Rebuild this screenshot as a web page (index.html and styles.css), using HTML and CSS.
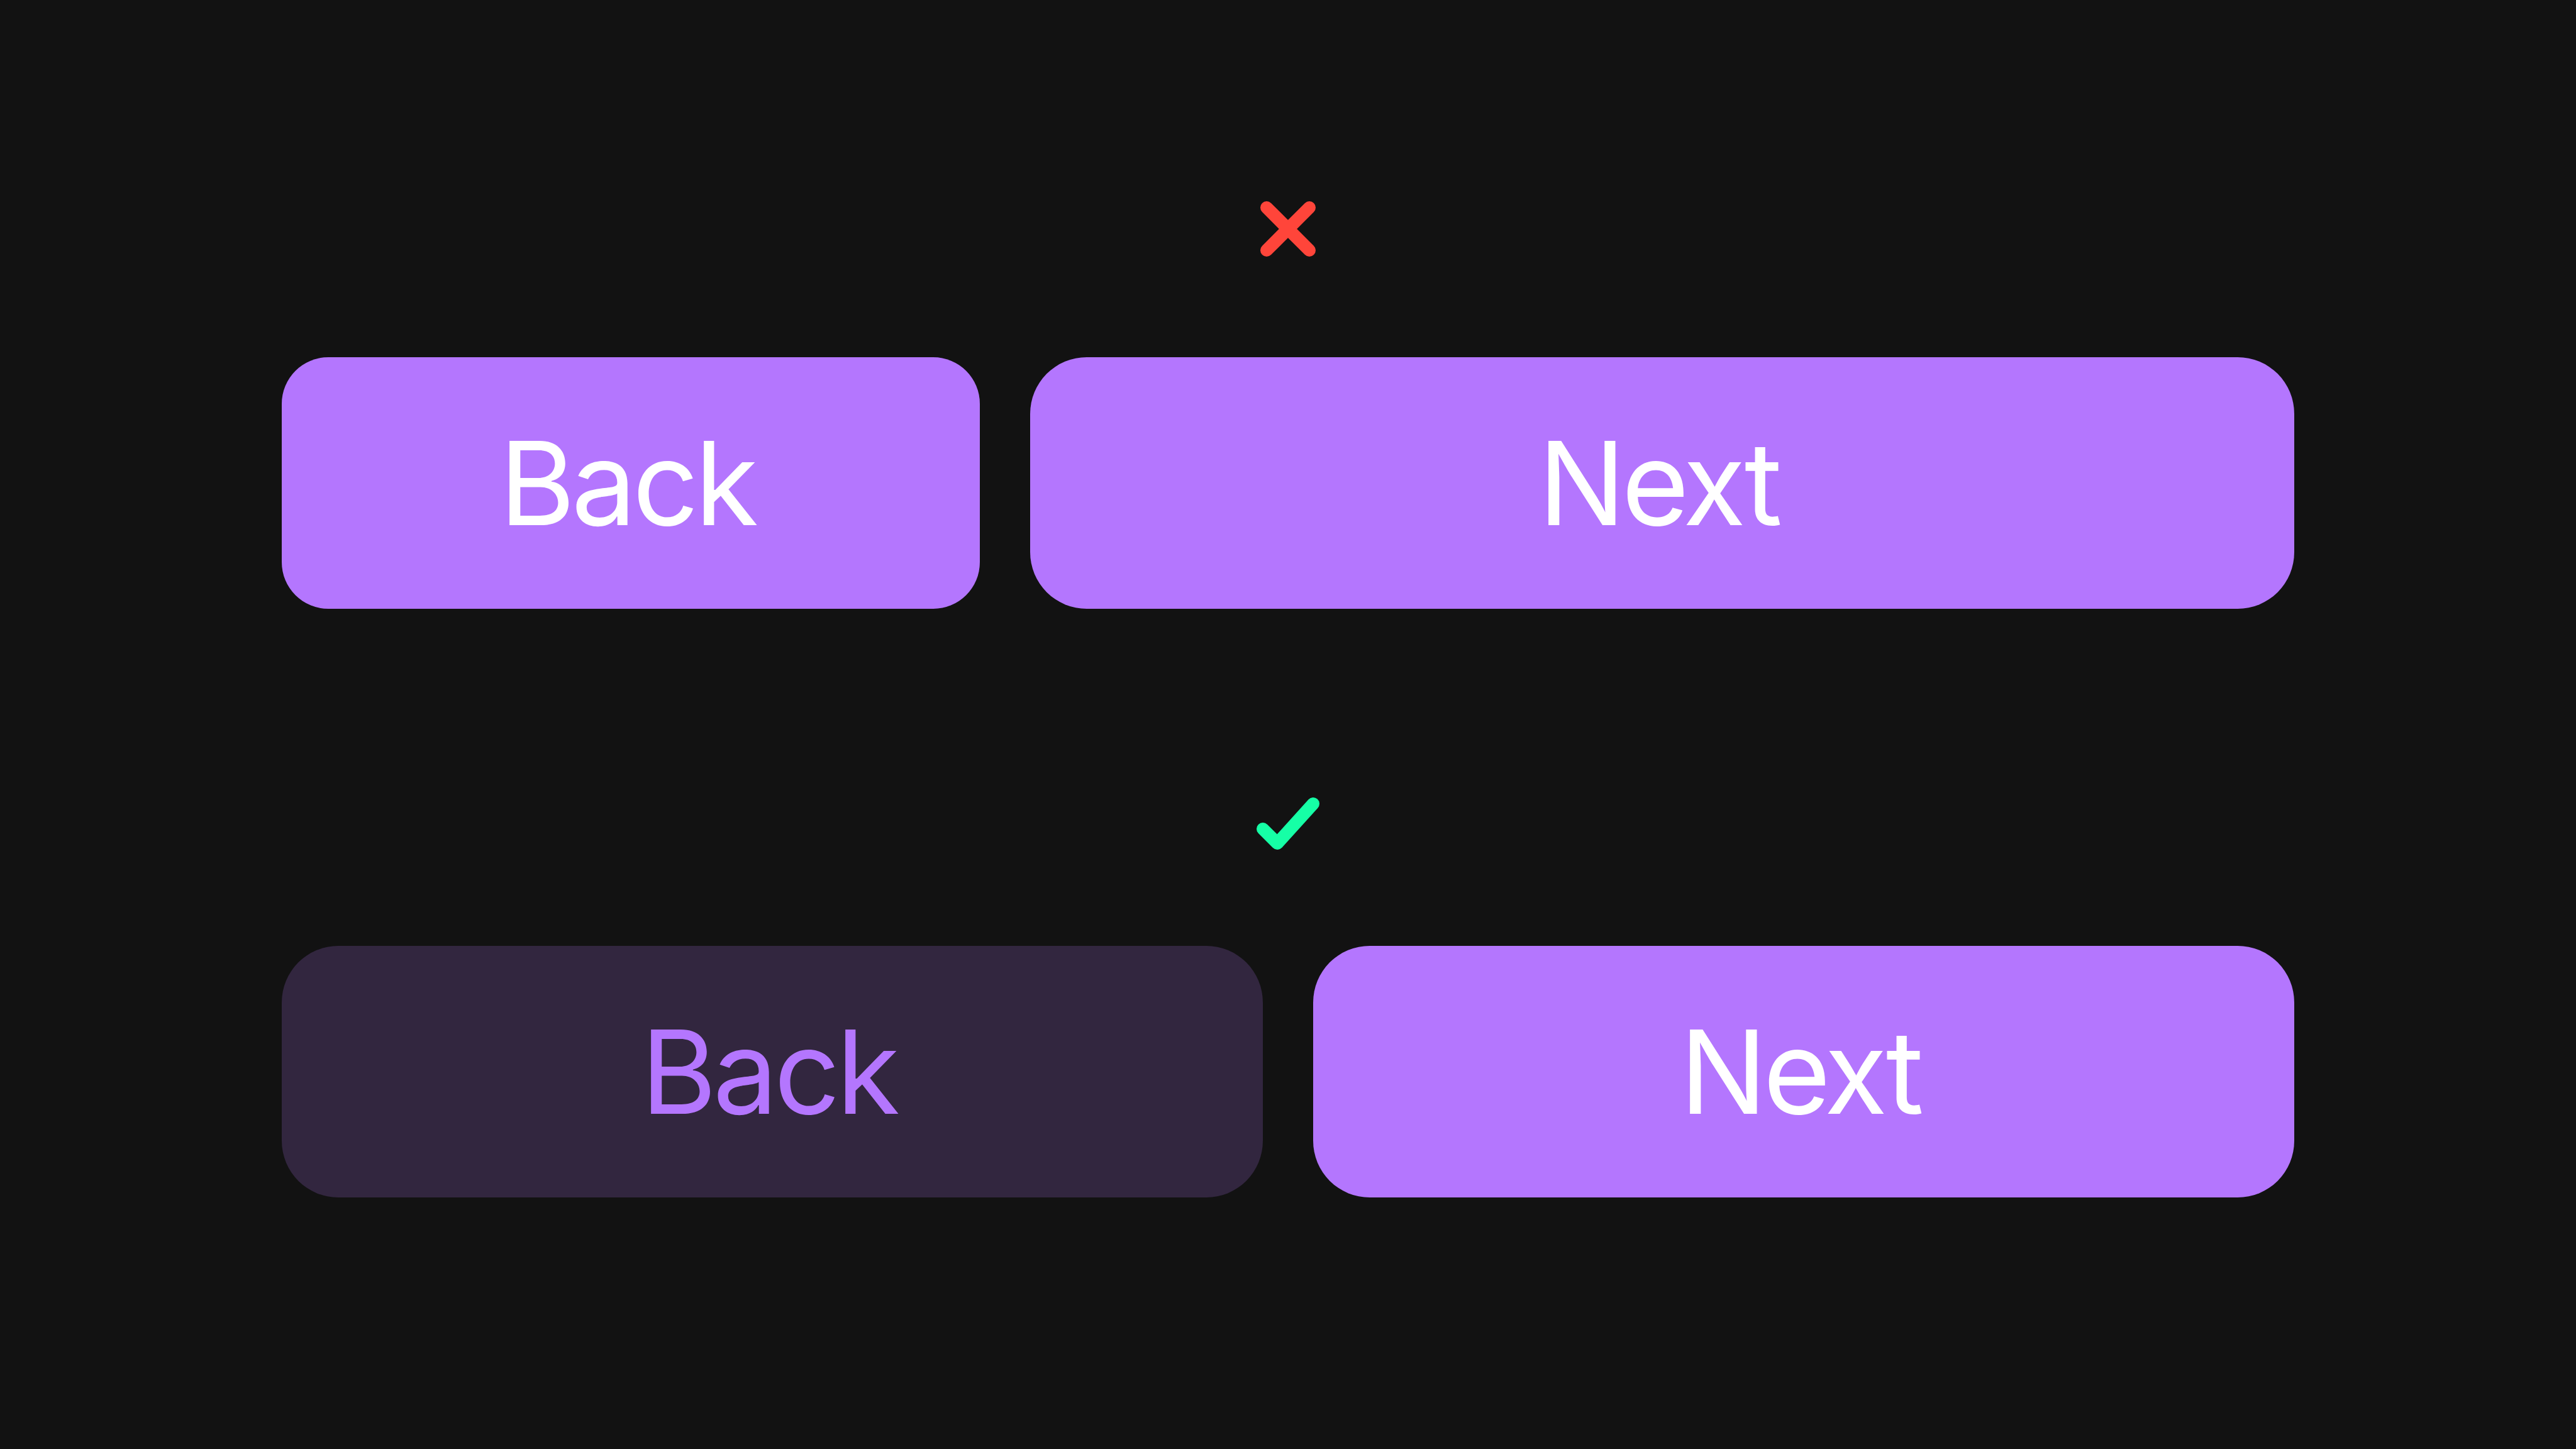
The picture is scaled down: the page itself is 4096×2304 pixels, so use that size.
FILE: index.html
```html
<!DOCTYPE html>
<html lang="en">
<head>
    <meta charset="UTF-8">
    <meta name="viewport" content="width=device-width, initial-scale=1.0">
    <title>Button Widths</title>
    <link rel="stylesheet" href="styles.css">
</head>
<body>
    <div class="page">
        <!-- Don't: uneven widths -->
        <section class="example example-dont">
            <svg class="mark" width="120" height="120" viewBox="0 0 120 120">
                <path d="M26 26 L94 94 M94 26 L26 94" stroke="#ff453a" stroke-width="20" stroke-linecap="round" fill="none"/>
            </svg>
            <div class="button-row">
                <button class="btn btn-primary btn-narrow">Back</button>
                <button class="btn btn-primary btn-wide">Next</button>
            </div>
        </section>

        <!-- Do: equal widths, secondary back -->
        <section class="example example-do">
            <svg class="mark" width="120" height="120" viewBox="0 0 120 120">
                <path d="M20 78 L43 101 L100 38" stroke="#16ffa6" stroke-width="20" stroke-linecap="round" stroke-linejoin="round" fill="none"/>
            </svg>
            <div class="button-row">
                <button class="btn btn-secondary btn-half">Back</button>
                <button class="btn btn-primary btn-half">Next</button>
            </div>
        </section>
    </div>
</body>
</html>
```

FILE: styles.css
```css
/* General Styling */
body {
    margin: 0;
    padding: 0;
    font-family: Inter, "Noto Sans", sans-serif;
    background-color: #121212;
    color: white;
    height: 100vh;
    overflow: hidden;
}

.page {
    display: flex;
    flex-direction: column;
    align-items: center;
    padding-top: 304px;
    gap: 272px;
}

.example {
    width: 3200px;
    display: flex;
    flex-direction: column;
    align-items: center;
    gap: 144px;
}

.mark {
    display: block;
}

.button-row {
    width: 100%;
    display: flex;
    gap: 80px;
}

.btn {
    height: 400px;
    border: none;
    border-radius: 90px;
    font-family: inherit;
    font-size: 184px;
    font-weight: 400;
    letter-spacing: -6px;
    padding: 0 12px 0 0;
    display: flex;
    align-items: center;
    justify-content: center;
    cursor: pointer;
}

.btn-primary {
    background-color: #b476fe;
    color: white;
}

.btn-secondary {
    background-color: #32263f;
    color: #b476fe;
}

.btn-narrow {
    flex: 0 0 1110px;
    border-radius: 74px;
}

.btn-wide {
    flex: 1;
}

.btn-half {
    flex: 1;
}
```
